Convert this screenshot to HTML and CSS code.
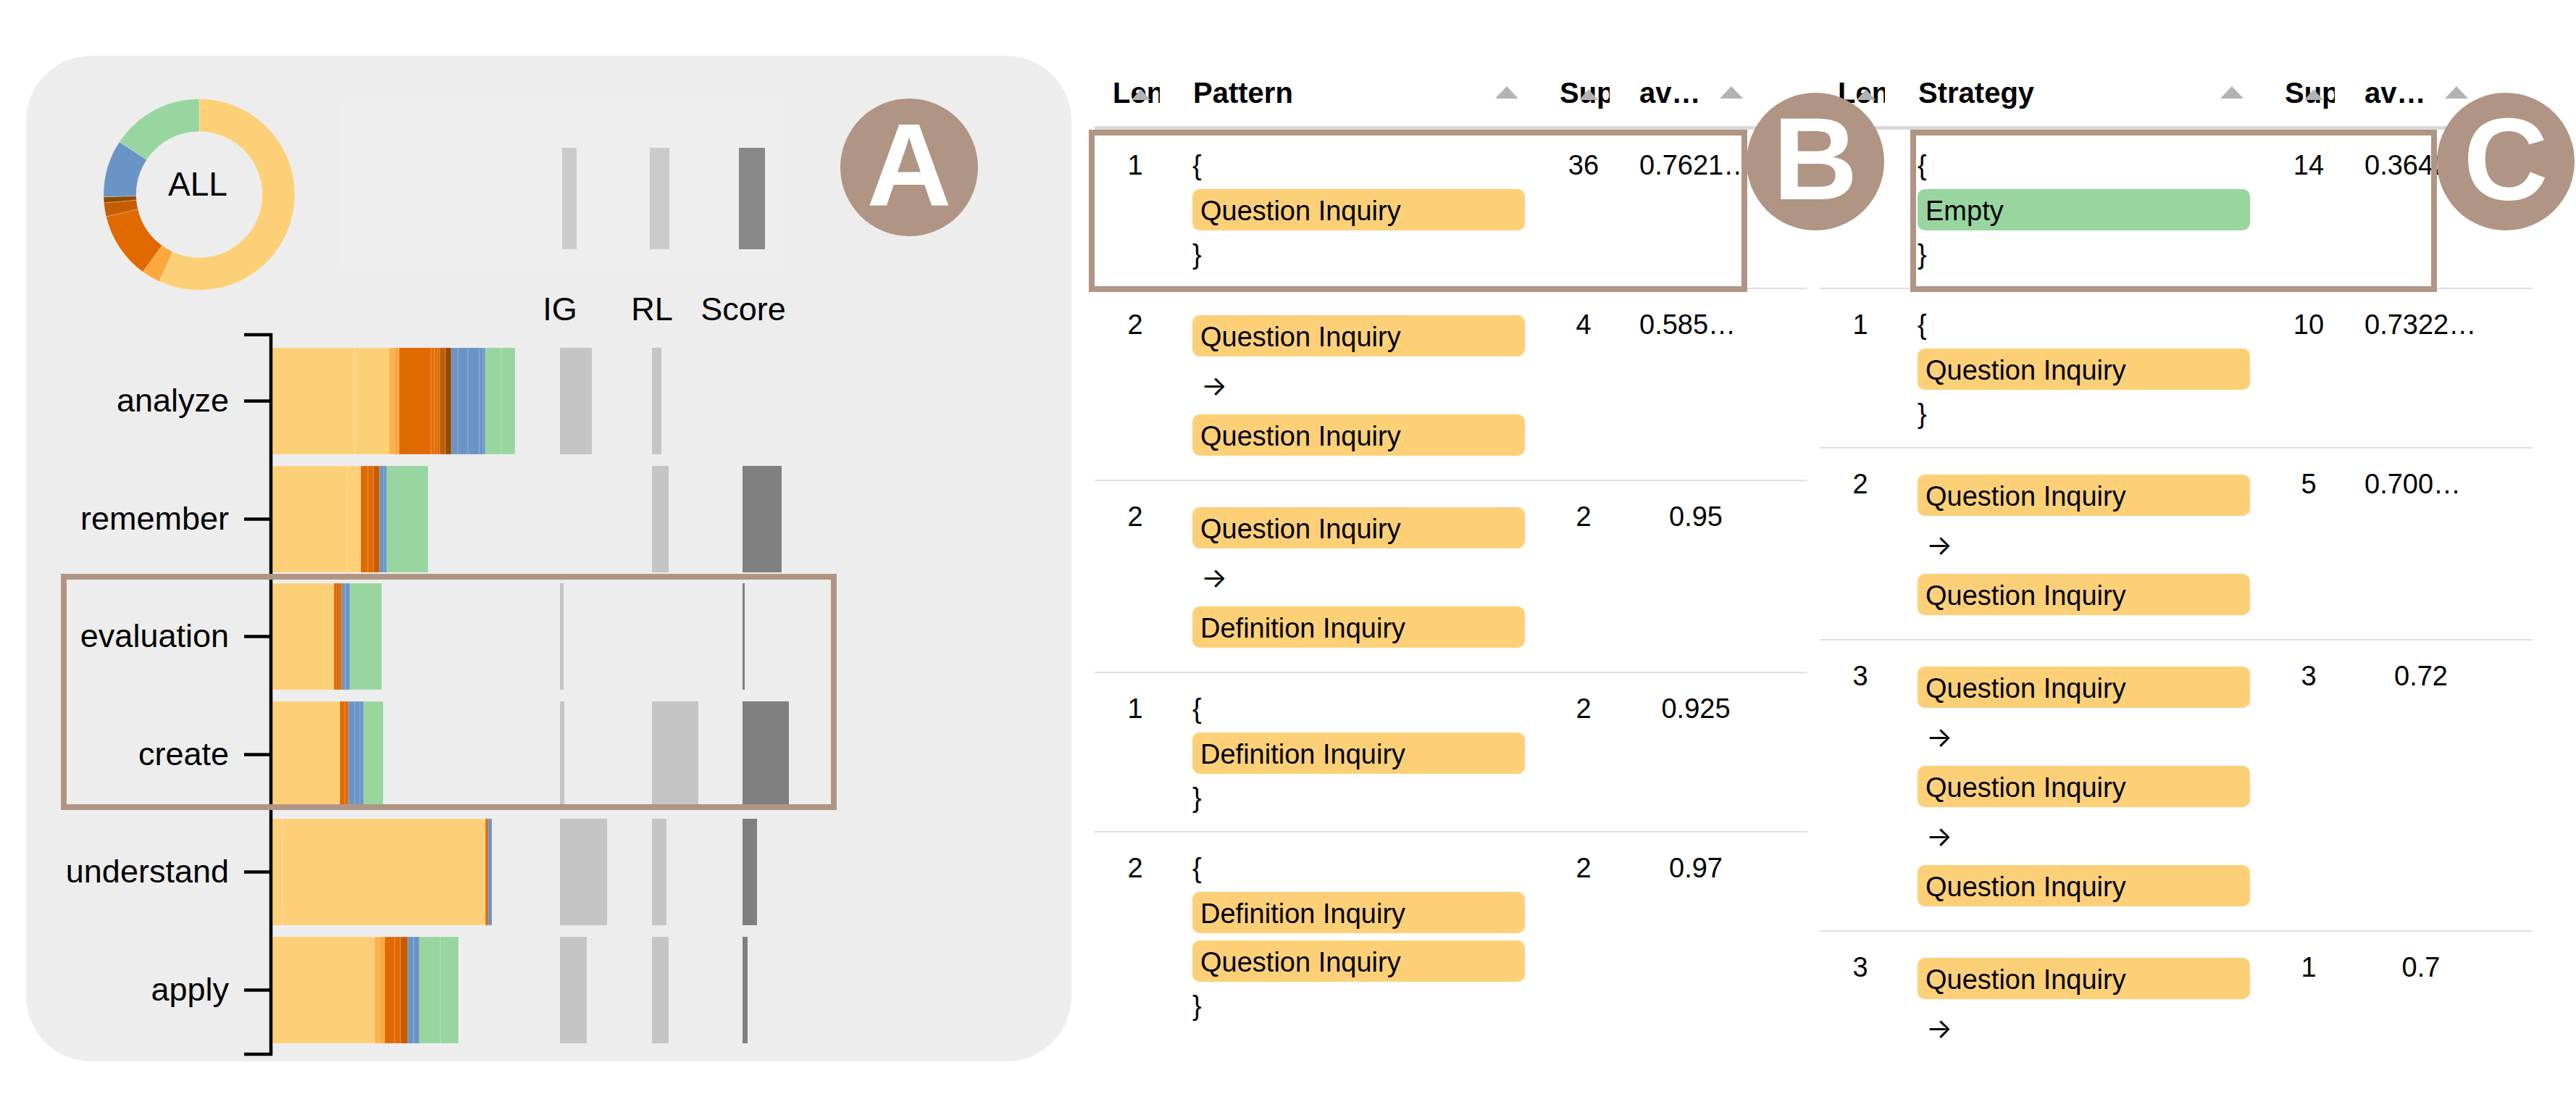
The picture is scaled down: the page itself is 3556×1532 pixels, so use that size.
FILE: index.html
```html
<!DOCTYPE html>
<html lang="en">
<head>
<meta charset="utf-8">
<title>Pattern explorer</title>
<link rel="stylesheet" href="styles.css">
</head>
<body>
<div class="page">
  <section class="panel-a">
    <svg class="chart" width="1443" height="1388" viewBox="36 77 1443 1388" xmlns="http://www.w3.org/2000/svg">
      <rect x="469" y="138" width="612" height="235" fill="#eeeeee"/>
      <g class="donut" stroke="#ffffff" stroke-opacity="0.25" stroke-width="1">
        <path fill="#fdd078" d="M275,136.5 A132,132 0 1 1 219.84,388.42 L238.64,347.54 A87,87 0 1 0 275,181.5 Z"/>
        <path fill="#fda83e" d="M219.84,388.42 A132,132 0 0 1 197.23,375.16 L223.74,338.8 A87,87 0 0 0 238.64,347.54 Z"/>
        <path fill="#e06900" d="M197.23,375.16 A132,132 0 0 1 146.59,299.08 L190.37,288.66 A87,87 0 0 0 223.74,338.8 Z"/>
        <path fill="#c55c00" d="M146.59,299.08 A132,132 0 0 1 143.5,280.01 L188.33,276.09 A87,87 0 0 0 190.37,288.66 Z"/>
        <path fill="#8f4b00" d="M143.5,280.01 A132,132 0 0 1 143.04,271.72 L188.03,270.62 A87,87 0 0 0 188.33,276.09 Z"/>
        <path fill="#6a94c6" d="M143.04,271.72 A132,132 0 0 1 164.93,195.65 L202.45,220.48 A87,87 0 0 0 188.03,270.62 Z"/>
        <path fill="#98d59f" d="M164.93,195.65 A132,132 0 0 1 275,136.5 L275,181.5 A87,87 0 0 0 202.45,220.48 Z"/>
      </g>
      <text class="t-all" x="273" y="270" text-anchor="middle">ALL</text>

      <rect x="776" y="204" width="20" height="140" fill="#cbcbcb"/>
      <rect x="897" y="204" width="27" height="140" fill="#cbcbcb"/>
      <rect x="1020" y="204" width="36" height="140" fill="#888888"/>

      <text x="773" y="442" text-anchor="middle">IG</text>
      <text x="900" y="442" text-anchor="middle">RL</text>
      <text x="1026" y="442" text-anchor="middle">Score</text>

      <g class="bars" stroke="#ffffff" stroke-opacity="0.22" stroke-width="1">
        <!-- analyze -->
        <rect x="376" y="480" width="114" height="147" fill="#fdd078"/>
        <rect x="490" y="480" width="47" height="147" fill="#fdd078"/>
        <rect x="537" y="480" width="7" height="147" fill="#fdb04a"/>
        <rect x="544" y="480" width="7" height="147" fill="#fda83e"/>
        <rect x="551" y="480" width="44" height="147" fill="#e06900"/>
        <rect x="595" y="480" width="5" height="147" fill="#e36f0a"/>
        <rect x="600" y="480" width="4" height="147" fill="#e06900"/>
        <rect x="604" y="480" width="3" height="147" fill="#d86500"/>
        <rect x="607" y="480" width="8" height="147" fill="#c55c00"/>
        <rect x="615" y="480" width="8" height="147" fill="#8f4b00"/>
        <rect x="623" y="480" width="9" height="147" fill="#6a94c6"/>
        <rect x="632" y="480" width="14" height="147" fill="#6a94c6"/>
        <rect x="646" y="480" width="16" height="147" fill="#6a94c6"/>
        <rect x="662" y="480" width="5" height="147" fill="#6a94c6"/>
        <rect x="667" y="480" width="3" height="147" fill="#6a94c6"/>
        <rect x="670" y="480" width="22" height="147" fill="#98d59f"/>
        <rect x="692" y="480" width="19" height="147" fill="#98d59f"/>
        <!-- remember -->
        <rect x="376" y="643" width="104" height="147" fill="#fdd078"/>
        <rect x="480" y="643" width="18" height="147" fill="#fdd078"/>
        <rect x="498" y="643" width="10" height="147" fill="#e06900"/>
        <rect x="508" y="643" width="8" height="147" fill="#e06900"/>
        <rect x="516" y="643" width="8" height="147" fill="#c55c00"/>
        <rect x="524" y="643" width="6" height="147" fill="#6a94c6"/>
        <rect x="530" y="643" width="4" height="147" fill="#6a94c6"/>
        <rect x="534" y="643" width="57" height="147" fill="#98d59f"/>
        <!-- evaluation -->
        <rect x="376" y="805" width="85" height="147" fill="#fdd078"/>
        <rect x="461" y="805" width="4" height="147" fill="#e06900"/>
        <rect x="465" y="805" width="3" height="147" fill="#c55c00"/>
        <rect x="468" y="805" width="4" height="147" fill="#e06900"/>
        <rect x="472" y="805" width="5" height="147" fill="#6a94c6"/>
        <rect x="477" y="805" width="6" height="147" fill="#6a94c6"/>
        <rect x="483" y="805" width="44" height="147" fill="#98d59f"/>
        <!-- create -->
        <rect x="376" y="968" width="93" height="147" fill="#fdd078"/>
        <rect x="469" y="968" width="7" height="147" fill="#e06900"/>
        <rect x="476" y="968" width="5" height="147" fill="#e06900"/>
        <rect x="481" y="968" width="9" height="147" fill="#6a94c6"/>
        <rect x="490" y="968" width="7" height="147" fill="#6a94c6"/>
        <rect x="497" y="968" width="5" height="147" fill="#6a94c6"/>
        <rect x="502" y="968" width="27" height="147" fill="#98d59f"/>
        <!-- understand -->
        <rect x="376" y="1130" width="14" height="147" fill="#fdd078"/>
        <rect x="390" y="1130" width="280" height="147" fill="#fdd078"/>
        <rect x="670" y="1130" width="4" height="147" fill="#e06900"/>
        <rect x="674" y="1130" width="5" height="147" fill="#6a94c6"/>
        <!-- apply -->
        <rect x="376" y="1293" width="141" height="147" fill="#fdd078"/>
        <rect x="517" y="1293" width="7" height="147" fill="#fdb04a"/>
        <rect x="524" y="1293" width="7" height="147" fill="#fda83e"/>
        <rect x="531" y="1293" width="14" height="147" fill="#e06900"/>
        <rect x="545" y="1293" width="8" height="147" fill="#e06900"/>
        <rect x="553" y="1293" width="10" height="147" fill="#c55c00"/>
        <rect x="563" y="1293" width="8" height="147" fill="#6a94c6"/>
        <rect x="571" y="1293" width="8" height="147" fill="#6a94c6"/>
        <rect x="579" y="1293" width="29" height="147" fill="#98d59f"/>
        <rect x="608" y="1293" width="25" height="147" fill="#98d59f"/>
      </g>

      <g class="metric">
        <rect x="773" y="480" width="44" height="147" fill="#c5c5c5"/>
        <rect x="900" y="480" width="13" height="147" fill="#c5c5c5"/>

        <rect x="900" y="643" width="23" height="147" fill="#c5c5c5"/>
        <rect x="1025" y="643" width="54" height="147" fill="#808080"/>

        <rect x="773" y="805" width="5" height="147" fill="#c5c5c5"/>
        <rect x="1025" y="805" width="3" height="147" fill="#808080"/>

        <rect x="773" y="968" width="6" height="147" fill="#c5c5c5"/>
        <rect x="900" y="968" width="64" height="147" fill="#c5c5c5"/>
        <rect x="1025" y="968" width="64" height="147" fill="#808080"/>

        <rect x="773" y="1130" width="65" height="147" fill="#c5c5c5"/>
        <rect x="900" y="1130" width="20" height="147" fill="#c5c5c5"/>
        <rect x="1025" y="1130" width="20" height="147" fill="#808080"/>

        <rect x="773" y="1293" width="37" height="147" fill="#c5c5c5"/>
        <rect x="900" y="1293" width="23" height="147" fill="#c5c5c5"/>
        <rect x="1025" y="1293" width="7" height="147" fill="#808080"/>
      </g>

      <g class="axis" stroke="#000000" stroke-width="4.5" fill="none">
        <path d="M337,462 H374 V1455 H337"/>
        <path d="M337,553.5 H374"/>
        <path d="M337,716.5 H374"/>
        <path d="M337,878.5 H374"/>
        <path d="M337,1041.5 H374"/>
        <path d="M337,1203.5 H374"/>
        <path d="M337,1366.5 H374"/>
      </g>
      <g class="labels" text-anchor="end">
        <text x="316" y="568">analyze</text>
        <text x="316" y="731">remember</text>
        <text x="316" y="893">evaluation</text>
        <text x="316" y="1056">create</text>
        <text x="316" y="1218">understand</text>
        <text x="316" y="1381">apply</text>
      </g>
    </svg>
  </section>

  <div class="table tb">
    <div class="row head">
      <div class="hcell h-len"><span class="txt">Length</span><span class="tri small"></span></div>
      <div class="hcell h-pat"><span class="txt">Pattern</span><span class="tri"></span></div>
      <div class="hcell h-sup"><span class="txt">Support</span><span class="tri small"></span></div>
      <div class="hcell h-avg"><span class="txt ell">avgScore</span><span class="tri"></span></div>
    </div>
    <div class="row body">
      <div class="c-len">1</div>
      <div class="c-pat"><div class="brace">{</div><div class="tag">Question Inquiry</div><div class="brace">}</div></div>
      <div class="c-sup">36</div>
      <div class="c-avg trunc">0.7621…</div>
    </div>
    <div class="row body">
      <div class="c-len">2</div>
      <div class="c-pat"><div class="tag">Question Inquiry</div><div class="arrow">→</div><div class="tag">Question Inquiry</div></div>
      <div class="c-sup">4</div>
      <div class="c-avg trunc">0.585…</div>
    </div>
    <div class="row body">
      <div class="c-len">2</div>
      <div class="c-pat"><div class="tag">Question Inquiry</div><div class="arrow">→</div><div class="tag">Definition Inquiry</div></div>
      <div class="c-sup">2</div>
      <div class="c-avg">0.95</div>
    </div>
    <div class="row body">
      <div class="c-len">1</div>
      <div class="c-pat"><div class="brace">{</div><div class="tag">Definition Inquiry</div><div class="brace">}</div></div>
      <div class="c-sup">2</div>
      <div class="c-avg">0.925</div>
    </div>
    <div class="row body">
      <div class="c-len">2</div>
      <div class="c-pat"><div class="brace">{</div><div class="tag">Definition Inquiry</div><div class="tag">Question Inquiry</div><div class="brace">}</div></div>
      <div class="c-sup">2</div>
      <div class="c-avg">0.97</div>
    </div>
  </div>

  <div class="table tc">
    <div class="row head">
      <div class="hcell h-len"><span class="txt">Length</span><span class="tri small"></span></div>
      <div class="hcell h-pat"><span class="txt">Strategy</span><span class="tri"></span></div>
      <div class="hcell h-sup"><span class="txt">Support</span><span class="tri small"></span></div>
      <div class="hcell h-avg"><span class="txt ell">avgScore</span><span class="tri"></span></div>
    </div>
    <div class="row body">
      <div class="c-len"></div>
      <div class="c-pat"><div class="brace">{</div><div class="tag tag-green">Empty</div><div class="brace">}</div></div>
      <div class="c-sup">14</div>
      <div class="c-avg trunc">0.3642…</div>
    </div>
    <div class="row body">
      <div class="c-len">1</div>
      <div class="c-pat"><div class="brace">{</div><div class="tag">Question Inquiry</div><div class="brace">}</div></div>
      <div class="c-sup">10</div>
      <div class="c-avg trunc">0.7322…</div>
    </div>
    <div class="row body">
      <div class="c-len">2</div>
      <div class="c-pat"><div class="tag">Question Inquiry</div><div class="arrow">→</div><div class="tag">Question Inquiry</div></div>
      <div class="c-sup">5</div>
      <div class="c-avg trunc">0.700…</div>
    </div>
    <div class="row body">
      <div class="c-len">3</div>
      <div class="c-pat"><div class="tag">Question Inquiry</div><div class="arrow">→</div><div class="tag">Question Inquiry</div><div class="arrow">→</div><div class="tag">Question Inquiry</div></div>
      <div class="c-sup">3</div>
      <div class="c-avg">0.72</div>
    </div>
    <div class="row body">
      <div class="c-len">3</div>
      <div class="c-pat"><div class="tag">Question Inquiry</div><div class="arrow">→</div><div class="tag">Question Inquiry</div><div class="arrow">→</div><div class="tag">Question Inquiry</div></div>
      <div class="c-sup">1</div>
      <div class="c-avg">0.7</div>
    </div>
  </div>

  <div class="hl hl-a"></div>
  <div class="hl hl-b"></div>
  <div class="hl hl-c"></div>
  <div class="badge badge-a">A</div>
  <div class="badge badge-b">B</div>
  <div class="badge badge-c">C</div>
</div>
</body>
</html>
```

FILE: styles.css
```css
* {
  box-sizing: border-box;
}

html,
body {
  margin: 0;
  background: #ffffff;
}

body {
  font-family: "Liberation Sans", Arial, Helvetica, sans-serif;
  color: #000000;
}

.page {
  position: relative;
  width: 3556px;
  height: 1532px;
  display: flex;
  align-items: flex-start;
  padding: 77px 0 0 36px;
  overflow: hidden;
}

/* ---------- panel A ---------- */
.panel-a {
  flex: none;
  width: 1443px;
  height: 1388px;
  background: #ededed;
  border-radius: 90px;
  overflow: hidden;
}

.chart {
  display: block;
}

.chart text {
  font-family: "Liberation Sans", Arial, Helvetica, sans-serif;
  font-size: 45px;
  fill: #000000;
}

.chart .t-all {
  font-size: 46px;
}

/* ---------- tables ---------- */
.table {
  flex: none;
  width: 984px;
  height: 1357px;
  overflow: hidden;
}

.tb {
  margin-left: 32px;
}

.tc {
  margin-left: 17px;
}

.row {
  display: grid;
  grid-template-columns: 112px 508px 110px 200px 1fr;
}

.head {
  padding: 28px 0 23px;
  border-bottom: 5px solid #d9d9d9;
  font-size: 40px;
  font-weight: bold;
  line-height: 46px;
}

.hcell {
  position: relative;
  height: 46px;
}

.hcell .txt {
  display: block;
  overflow: hidden;
  white-space: nowrap;
}

.hcell .ell {
  max-width: 90px;
  text-overflow: ellipsis;
}

.h-len {
  padding: 0 22px 0 25px;
}

.h-pat {
  padding-left: 24px;
}

.h-sup {
  padding: 0 19px 0 22px;
}

.h-avg {
  padding-left: 22px;
}

.tri {
  position: absolute;
  top: 14px;
  right: 35px;
  width: 0;
  height: 0;
  border-left: 16.5px solid transparent;
  border-right: 16.5px solid transparent;
  border-bottom: 17px solid #b3b3b3;
}

.tri.small {
  top: 18px;
  border-left-width: 13.5px;
  border-right-width: 13.5px;
  border-bottom-width: 15px;
}

.body {
  padding: 26px 0 23px;
  border-bottom: 2px solid #dedede;
  font-size: 38px;
  line-height: 46px;
}

.c-len,
.c-sup {
  text-align: center;
}

.c-pat {
  padding-left: 23px;
}

.c-avg {
  padding: 0 22px;
  text-align: center;
  white-space: nowrap;
}

.c-avg.trunc {
  text-align: left;
}

.brace {
  height: 46px;
}

.arrow {
  height: 60px;
  line-height: 60px;
  padding-left: 12px;
  font-family: Inter, "DejaVu Sans", sans-serif;
  font-size: 38px;
}

.tag {
  width: 459px;
  height: 57px;
  margin: 10px 0;
  padding: 4px 0 0 11px;
  border-radius: 10px;
  background: #fdd078;
  line-height: 53px;
  white-space: nowrap;
}

.tag-green {
  background: #98d59f;
}

/* ---------- annotation overlays ---------- */
.hl {
  position: absolute;
  border: 8px solid #b09584;
}

.hl-a {
  left: 84px;
  top: 792px;
  width: 1071px;
  height: 326px;
}

.hl-b {
  left: 1503px;
  top: 179px;
  width: 909px;
  height: 224px;
}

.hl-c {
  left: 2637px;
  top: 179px;
  width: 727px;
  height: 224px;
}

.badge {
  position: absolute;
  width: 190px;
  height: 190px;
  padding-bottom: 8px;
  border-radius: 50%;
  background: #b09584;
  color: #ffffff;
  font-family: "Liberation Sans", Arial, Helvetica, sans-serif;
  font-size: 162px;
  font-weight: bold;
  line-height: 1;
  display: flex;
  align-items: center;
  justify-content: center;
}

.badge-a {
  left: 1160px;
  top: 136px;
}

.badge-b {
  left: 2411px;
  top: 128px;
}

.badge-c {
  left: 3364px;
  top: 128px;
}
```
